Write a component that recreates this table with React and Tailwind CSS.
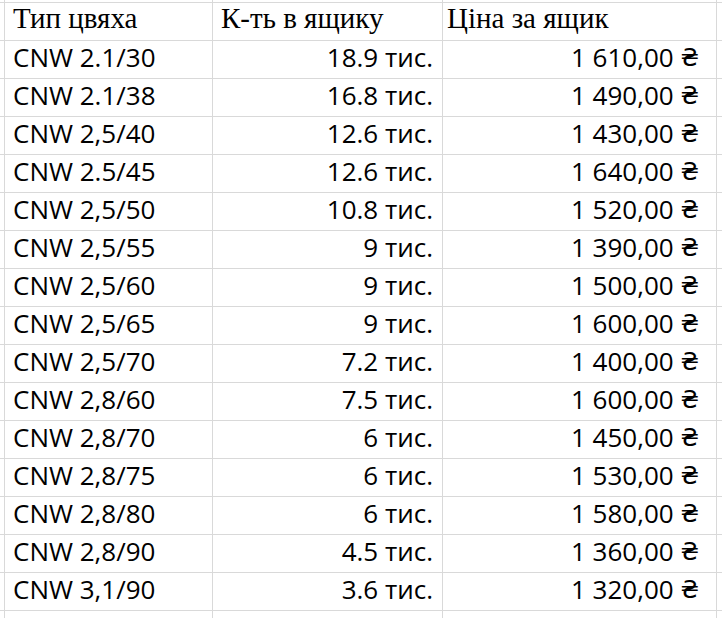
const rows = [
    ["CNW 2.1/30", "18.9 тис.", "1 610,00"],
    ["CNW 2.1/38", "16.8 тис.", "1 490,00"],
    ["CNW 2,5/40", "12.6 тис.", "1 430,00"],
    ["CNW 2.5/45", "12.6 тис.", "1 640,00"],
    ["CNW 2,5/50", "10.8 тис.", "1 520,00"],
    ["CNW 2,5/55", "9 тис.", "1 390,00"],
    ["CNW 2,5/60", "9 тис.", "1 500,00"],
    ["CNW 2,5/65", "9 тис.", "1 600,00"],
    ["CNW 2,5/70", "7.2 тис.", "1 400,00"],
    ["CNW 2,8/60", "7.5 тис.", "1 600,00"],
    ["CNW 2,8/70", "6 тис.", "1 450,00"],
    ["CNW 2,8/75", "6 тис.", "1 530,00"],
    ["CNW 2,8/80", "6 тис.", "1 580,00"],
    ["CNW 2,8/90", "4.5 тис.", "1 360,00"],
    ["CNW 3,1/90", "3.6 тис.", "1 320,00"],
];

const Row = ({children, className = ""}) => (
    <div className={`flex border-b border-[#d9d9d9] ${className}`}>
        <div className="w-[5px] shrink-0 border-r border-[#d9d9d9]"/>
        {children}
        <div className="flex-1"/>
    </div>
);

const App = () => {
    return (
        <div className="w-[722px] h-[618px] overflow-hidden bg-white text-black">
            <Row className="h-[3px]">
                <div className="w-[208px] shrink-0 border-r border-[#d9d9d9]"/>
                <div className="w-[230px] shrink-0 border-r border-[#d9d9d9]"/>
                <div className="w-[274px] shrink-0 border-r border-[#d9d9d9]"/>
            </Row>

            {/* header */}
            <Row className="h-[38px] font-['Liberation_Serif',serif] text-[29px] leading-none">
                <div className="w-[208px] shrink-0 border-r border-[#d9d9d9] flex items-end pb-[7px] pl-[8px]">
                    Тип цвяха
                </div>
                <div className="w-[230px] shrink-0 border-r border-[#d9d9d9] flex items-end pb-[7px] pl-[8px]">
                    К-ть в ящику
                </div>
                <div className="w-[274px] shrink-0 border-r border-[#d9d9d9] flex items-end pb-[7px] pl-[4px]">
                    Ціна за ящик
                </div>
            </Row>

            {rows.map(([type, qty, price]) => (
                <Row
                    key={type}
                    className="h-[38px] font-['Open_Sans','Noto_Sans','DejaVu_Sans',sans-serif] text-[26px] leading-none"
                >
                    <div className="w-[208px] shrink-0 border-r border-[#d9d9d9] flex items-end pb-[8px] pl-[8px]">
                        {type}
                    </div>
                    <div className="w-[230px] shrink-0 border-r border-[#d9d9d9] flex items-end justify-end pb-[8px] pr-[9px]">
                        {qty}
                    </div>
                    <div className="w-[274px] shrink-0 border-r border-[#d9d9d9] flex items-end justify-end pb-[8px] pr-[17px]">
                        {price}&nbsp;<span className="font-['DejaVu_Sans',sans-serif] text-[24px]">₴</span>
                    </div>
                </Row>
            ))}

            <div className="flex h-[8px]">
                <div className="w-[5px] shrink-0 border-r border-[#d9d9d9]"/>
                <div className="w-[208px] shrink-0 border-r border-[#d9d9d9]"/>
                <div className="w-[230px] shrink-0 border-r border-[#d9d9d9]"/>
                <div className="w-[274px] shrink-0 border-r border-[#d9d9d9]"/>
            </div>
        </div>
    );
};

export default App;
